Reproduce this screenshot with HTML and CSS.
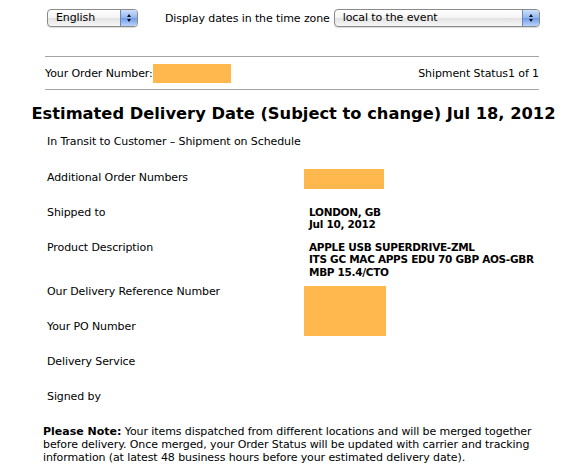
FILE: index.html
```html
<!DOCTYPE html>
<html>
<head>
<meta charset="utf-8">
<link rel="stylesheet" href="styles.css">
</head>
<body>
<div class="page">
  <div class="toolbar">
    <div class="select select-lang"><span class="select-text">English</span><span class="select-btn"><span class="arr-up"></span><span class="arr-down"></span></span></div>
    <span class="tz-label">Display dates in the time zone</span>
    <div class="select select-tz"><span class="select-text">local to the event</span><span class="select-btn"><span class="arr-up"></span><span class="arr-down"></span></span></div>
  </div>
  <div class="orderbar">
    <div class="order-left"><span>Your Order Number:</span><span class="redact redact-order"></span></div>
    <div class="order-right">Shipment Status1 of 1</div>
  </div>
  <h1 class="heading">Estimated Delivery Date (Subject to change) Jul 18, 2012</h1>
  <div class="status">In Transit to Customer – Shipment on Schedule</div>
  <div class="details">
    <div class="label">Additional Order Numbers</div>
    <div class="value"><span class="redact redact-small"></span></div>
    <div class="label">Shipped to</div>
    <div class="value bold">LONDON, GB<br>Jul 10, 2012</div>
    <div class="label">Product Description</div>
    <div class="value bold">APPLE USB SUPERDRIVE-ZML<br>ITS GC MAC APPS EDU 70 GBP AOS-GBR<br>MBP 15.4/CTO</div>
    <div class="label">Our Delivery Reference Number</div>
    <div class="value span2"><span class="redact redact-big"></span></div>
    <div class="label">Your PO Number</div>
    <div class="label">Delivery Service</div>
    <div class="value"></div>
    <div class="label">Signed by</div>
    <div class="value"></div>
  </div>
  <p class="note"><b>Please Note:</b> Your items dispatched from different locations and will be merged together before delivery. Once merged, your Order Status will be updated with carrier and tracking information (at latest 48 business hours before your estimated delivery date).</p>
</div>
</body>
</html>
```
FILE: styles.css
```css
html, body {
  margin: 0;
  padding: 0;
  background: #fff;
}
body {
  font-family: "DejaVu Sans", "Lucida Grande", sans-serif;
  font-size: 11px;
  letter-spacing: -0.1px;
  color: #000;
}
.page {
  width: 587px;
  padding-top: 9px;
}
.toolbar {
  display: flex;
  align-items: center;
  padding-left: 47px;
  height: 18px;
}
.select {
  display: flex;
  align-items: stretch;
  height: 16px;
  border: 1px solid #8a8a8a;
  border-radius: 4px;
  background: linear-gradient(#ffffff, #f4f4f4 50%, #e2e2e2 51%, #f6f6f6);
  box-shadow: 0 1px 1px rgba(0,0,0,0.15);
  overflow: hidden;
  font-size: 11px;
}
.select-text {
  flex: 1;
  padding-left: 8px;
  line-height: 16px;
}
.select-btn {
  width: 16px;
  border-left: 1px solid #6d86b3;
  background: linear-gradient(#cfe0fb, #8fb4ee 50%, #6f9be8 51%, #b9d3fb);
  display: flex;
  flex-direction: column;
  align-items: center;
  justify-content: center;
  gap: 2px;
}
.arr-up {
  width: 0; height: 0;
  border-left: 2.5px solid transparent;
  border-right: 2.5px solid transparent;
  border-bottom: 3px solid #111;
}
.arr-down {
  width: 0; height: 0;
  border-left: 2.5px solid transparent;
  border-right: 2.5px solid transparent;
  border-top: 3px solid #111;
}
.select-lang {
  width: 89px;
}
.tz-label {
  margin-left: 27px;
  margin-right: 4px;
}
.select-tz {
  width: 204px;
}
.orderbar {
  margin: 29px 48px 0 45px;
  border-top: 1px solid #a4a4a4;
  border-bottom: 1px solid #a4a4a4;
  height: 32px;
  display: flex;
  justify-content: space-between;
  align-items: center;
}
.order-left {
  display: flex;
  align-items: center;
}
.redact {
  display: inline-block;
  background: #ffb84d;
}
.redact-order {
  width: 78px;
  height: 19px;
  margin-top: 1px;
}
.heading {
  font-size: 16.3px;
  font-weight: bold;
  letter-spacing: 0;
  text-align: center;
  margin: 12.5px 0 0;
  line-height: 22px;
}
.status {
  margin: 10px 0 0 47px;
  line-height: 13px;
}
.details {
  margin: 23px 0 0 47px;
  display: grid;
  grid-template-columns: 257px 1fr;
  grid-auto-rows: minmax(35px, auto);
  line-height: 13px;
}
.value {
  padding-left: 5px;
  padding-bottom: 6.5px;
}
.bold {
  font-weight: bold;
  font-size: 10.5px;
  letter-spacing: -0.3px;
  line-height: 12.5px;
}
.span2 {
  grid-row: span 2;
}
.redact-small {
  width: 80px;
  height: 20px;
  margin-top: -2px;
  margin-left: -5px;
}
.redact-big {
  width: 82px;
  height: 50px;
  margin-top: 1px;
  margin-left: -5px;
}
.note {
  margin: 0 46px 0 43px;
  line-height: 13px;
}
.note b {
  letter-spacing: 0;
}
```
